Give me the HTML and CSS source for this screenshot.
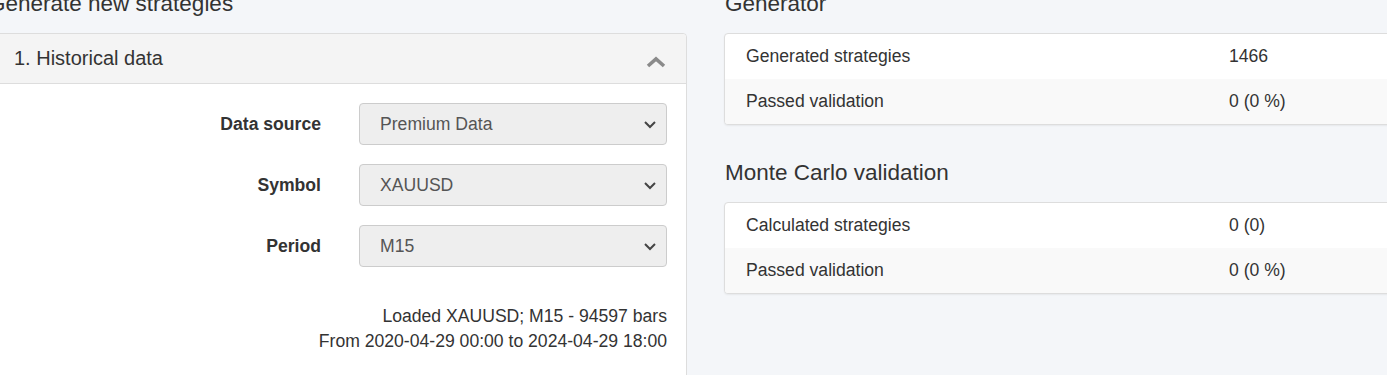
FILE: index.html
```html
<!DOCTYPE html>
<html>
<head>
<meta charset="utf-8">
<link rel="stylesheet" href="styles.css">
</head>
<body>
<div class="page">
  <section class="col-left">
    <h3 class="section-title">Generate new strategies</h3>
    <div class="panel">
      <div class="panel-heading">
        <span class="panel-title">1. Historical data</span>
        <svg class="collapse-icon" width="20" height="12" viewBox="0 0 20 12"><path d="M2 10 L10 3 L18 10" fill="none" stroke="#8a8a8a" stroke-width="3.6"/></svg>
      </div>
      <div class="panel-body">
        <div class="form-grid">
          <label class="form-label">Data source</label>
          <div class="select"><span>Premium Data</span><svg class="caret" width="14" height="9" viewBox="0 0 14 9"><path d="M2 2 L7 7 L12 2" fill="none" stroke="#444" stroke-width="2"/></svg></div>
          <label class="form-label">Symbol</label>
          <div class="select"><span>XAUUSD</span><svg class="caret" width="14" height="9" viewBox="0 0 14 9"><path d="M2 2 L7 7 L12 2" fill="none" stroke="#444" stroke-width="2"/></svg></div>
          <label class="form-label">Period</label>
          <div class="select"><span>M15</span><svg class="caret" width="14" height="9" viewBox="0 0 14 9"><path d="M2 2 L7 7 L12 2" fill="none" stroke="#444" stroke-width="2"/></svg></div>
        </div>
        <div class="data-info">
          <div>Loaded XAUUSD; M15 - 94597 bars</div>
          <div>From 2020-04-29 00:00 to 2024-04-29 18:00</div>
        </div>
      </div>
    </div>
  </section>
  <section class="col-right">
    <h3 class="section-title">Generator</h3>
    <div class="stats">
      <div class="stat-row"><div class="stat-label">Generated strategies</div><div class="stat-value">1466</div></div>
      <div class="stat-row alt"><div class="stat-label">Passed validation</div><div class="stat-value">0 (0 %)</div></div>
    </div>
    <h3 class="section-title mc">Monte Carlo validation</h3>
    <div class="stats">
      <div class="stat-row"><div class="stat-label">Calculated strategies</div><div class="stat-value">0 (0)</div></div>
      <div class="stat-row alt"><div class="stat-label">Passed validation</div><div class="stat-value">0 (0 %)</div></div>
    </div>
  </section>
</div>
</body>
</html>
```
FILE: styles.css
```css
html, body {
  margin: 0;
  padding: 0;
  background: #f4f6f9;
  overflow: hidden;
  height: 375px;
}
body {
  font-family: "Liberation Sans", Arial, sans-serif;
  font-size: 17.6px;
  color: #333;
}
.page {
  display: flex;
  align-items: flex-start;
  gap: 37px;
  margin-left: -13px;
  margin-top: -8px;
  width: 1800px;
}
.col-left {
  width: 700px;
  flex: none;
}
.col-right {
  width: 968px;
  flex: none;
}
.section-title {
  margin: 0 0 17px 1px;
  font-size: 22.5px;
  font-weight: 400;
  line-height: 24px;
  color: #333;
}
.section-title.mc {
  margin-top: 36px;
}
.panel {
  background: #fff;
  border: 1px solid #ddd;
  border-radius: 4px;
  min-height: 400px;
}
.panel-heading {
  display: flex;
  align-items: center;
  justify-content: space-between;
  background: #f4f4f4;
  border-bottom: 1px solid #ddd;
  border-radius: 4px 4px 0 0;
  padding: 12px 20px 12px 26px;
  height: 25px;
}
.panel-title {
  font-size: 20px;
  line-height: 25px;
}
.collapse-icon {
  margin-top: 6px;
}
.panel-body {
  padding: 19px 19px 0 0;
}
.form-grid {
  display: grid;
  grid-template-columns: 1fr 308px;
  column-gap: 38px;
  row-gap: 19px;
  align-items: center;
}
.form-label {
  text-align: right;
  font-weight: 700;
}
.select {
  position: relative;
  box-sizing: border-box;
  height: 42px;
  background: #eee;
  border: 1px solid #ccc;
  border-radius: 4px;
  padding: 0 20px;
  display: flex;
  align-items: center;
  color: #555;
}
.caret {
  position: absolute;
  right: 9px;
  top: 16px;
}
.data-info {
  margin-top: 37px;
  text-align: right;
  line-height: 25px;
}
.stats {
  background: #fff;
  border: 1px solid #ddd;
  border-radius: 4px;
  box-shadow: 0 1px 2px rgba(0,0,0,0.06);
  overflow: hidden;
}
.stat-row {
  display: grid;
  grid-template-columns: 50% 50%;
  height: 45px;
  align-items: center;
}
.stat-row.alt {
  background: #f9f9f9;
}
.stat-label, .stat-value {
  padding: 0 21px;
}
```
